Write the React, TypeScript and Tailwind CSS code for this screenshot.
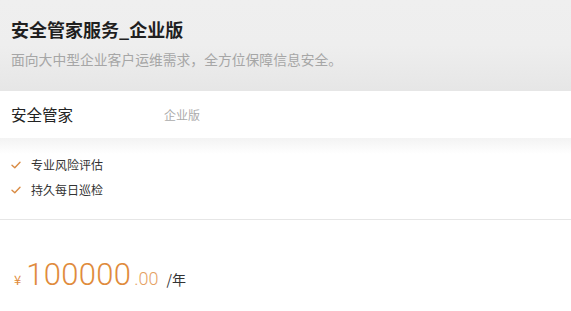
const cjk = "font-['Noto_Sans_CJK_SC','Noto_Sans',sans-serif]";

function Check() {
  return (
    <svg width="10" height="8" viewBox="0 0 10 8" fill="none" className="shrink-0">
      <path d="M1 4.2 L3.8 6.8 L9 1.2" stroke="#d98c45" strokeWidth="1.4" strokeLinecap="round" strokeLinejoin="round" />
    </svg>
  );
}

export default function App() {
  const features = ["专业风险评估", "持久每日巡检"];

  return (
    <div className={`${cjk} h-[311px] w-[571px] overflow-hidden bg-white`}>
      <div className="h-[91px] bg-gradient-to-b from-[#efefef] via-[#eeeeee] to-[#e6e6e6] px-[11px] pt-[17px]">
        <h1 className="text-[18px] font-bold leading-[24px] text-[#1f1f1f]">安全管家服务_企业版</h1>
        <p className="mt-[9px] text-[13.8px] leading-[18px] text-[#a6a6a6]">
          面向大中型企业客户运维需求，全方位保障信息安全。
        </p>
      </div>

      <div className="flex h-[47px] items-center px-[11px]">
        <span className="w-[153px] text-[15.5px] text-[#222]">安全管家</span>
        <span className="text-[12px] text-[#ababab]">企业版</span>
      </div>

      <div className="h-[16px] bg-gradient-to-b from-[#f3f3f3] to-white" />

      <ul className="flex flex-col gap-[7px] px-[11px] pb-[20px] pt-[2px]">
        {features.map((f) => (
          <li key={f} className="flex items-center gap-[10px] text-[12px] leading-[18px] text-[#333]">
            <Check />
            {f}
          </li>
        ))}
      </ul>

      <div className="h-px bg-[#e6e6e6]" />

      <div className="flex items-baseline px-[14px] pt-[37px] text-[#e08b3c]">
        <span className="mr-[5px] text-[13px]">¥</span>
        <span className="font-['Roboto',sans-serif] text-[31px] font-light leading-[36px] tracking-[0.3px]">100000</span>
        <span className="ml-[3px] font-['Roboto',sans-serif] text-[18px] font-light opacity-80">.00</span>
        <span className="ml-[8px] text-[14px] text-[#333]">/年</span>
      </div>
    </div>
  );
}
